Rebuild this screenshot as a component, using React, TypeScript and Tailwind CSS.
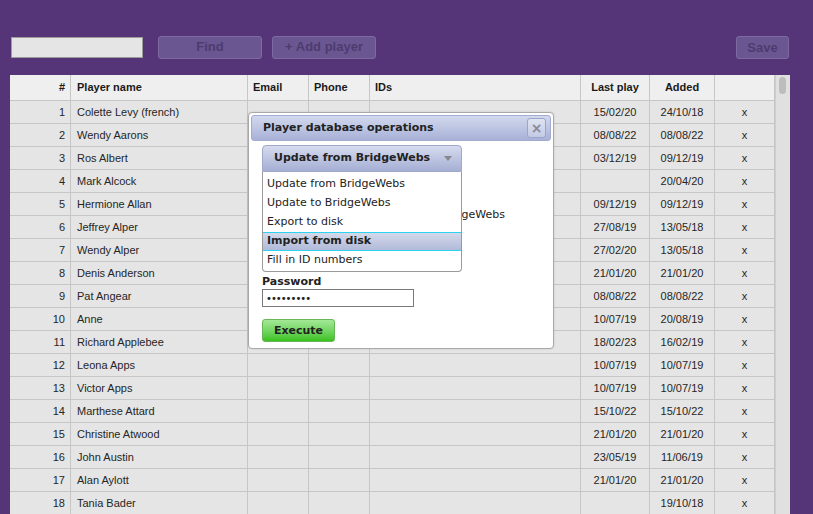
import React from 'react';

type Player = { id: number; name: string; lastPlay: string; added: string };

const PLAYERS: Player[] = [
  { id: 1, name: 'Colette Levy (french)', lastPlay: '15/02/20', added: '24/10/18' },
  { id: 2, name: 'Wendy Aarons', lastPlay: '08/08/22', added: '08/08/22' },
  { id: 3, name: 'Ros Albert', lastPlay: '03/12/19', added: '09/12/19' },
  { id: 4, name: 'Mark Alcock', lastPlay: '', added: '20/04/20' },
  { id: 5, name: 'Hermione Allan', lastPlay: '09/12/19', added: '09/12/19' },
  { id: 6, name: 'Jeffrey Alper', lastPlay: '27/08/19', added: '13/05/18' },
  { id: 7, name: 'Wendy Alper', lastPlay: '27/02/20', added: '13/05/18' },
  { id: 8, name: 'Denis Anderson', lastPlay: '21/01/20', added: '21/01/20' },
  { id: 9, name: 'Pat Angear', lastPlay: '08/08/22', added: '08/08/22' },
  { id: 10, name: 'Anne', lastPlay: '10/07/19', added: '20/08/19' },
  { id: 11, name: 'Richard Applebee', lastPlay: '18/02/23', added: '16/02/19' },
  { id: 12, name: 'Leona Apps', lastPlay: '10/07/19', added: '10/07/19' },
  { id: 13, name: 'Victor Apps', lastPlay: '10/07/19', added: '10/07/19' },
  { id: 14, name: 'Marthese Attard', lastPlay: '15/10/22', added: '15/10/22' },
  { id: 15, name: 'Christine Atwood', lastPlay: '21/01/20', added: '21/01/20' },
  { id: 16, name: 'John Austin', lastPlay: '23/05/19', added: '11/06/19' },
  { id: 17, name: 'Alan Aylott', lastPlay: '21/01/20', added: '21/01/20' },
  { id: 18, name: 'Tania Bader', lastPlay: '', added: '19/10/18' },
];

const OPERATIONS = [
  'Update from BridgeWebs',
  'Update to BridgeWebs',
  'Export to disk',
  'Import from disk',
  'Fill in ID numbers',
];

const GRID = 'grid grid-cols-[61px_177px_61px_61px_211px_69px_65px_60px]';
const CELL = 'border-r border-b border-[#c6c6c6] flex items-center';

function TopButton({ label, width }: { label: string; width: string }) {
  return (
    <button
      className={`${width} h-[23px] rounded-[3px] border border-[#7c6aa1] bg-[#6a5791] text-[13px] font-bold text-[#4d3b70]`}
    >
      {label}
    </button>
  );
}

function OperationsDialog() {
  const selected = 'Import from disk';
  return (
    <div className="absolute left-[248px] top-[112px] w-[306px] h-[237px] rounded-[4px] border border-[#a9a9a9] bg-white p-[2px] font-['DejaVu_Sans',sans-serif] text-[11px] text-[#222] shadow-[0_0_2px_rgba(0,0,0,0.15)]">
      {/* Title bar */}
      <div className="flex h-[26px] items-center justify-between rounded-[3px] border border-[#a3acd0] bg-gradient-to-b from-[#d2d8ed] to-[#a8b2d7] pl-[11px] pr-[4px]">
        <span className="pt-[1px] font-bold">Player database operations</span>
        <span className="flex h-[20px] w-[19px] items-center justify-center rounded-[3px] border border-[#9ba5ca] bg-gradient-to-b from-[#dfe3f1] to-[#c3cae4] text-[14px] font-bold leading-none text-[#8a8a9a]">
          ×
        </span>
      </div>

      {/* Body */}
      <div className="relative px-[11px] pt-[4px]">
        <div className="flex h-[27px] w-[200px] items-center justify-between rounded-t-[4px] border border-[#a1a9cb] bg-gradient-to-b from-[#d6dbee] to-[#a5afd4] pl-[11px] pr-[9px]">
          <span className="font-bold">Update from BridgeWebs</span>
          <span className="h-0 w-0 border-x-[4px] border-t-[5px] border-x-transparent border-t-[#888]" />
        </div>

        {/* Description line, mostly hidden by the open list */}
        <p className="mt-[36px] flex w-[243px] justify-end whitespace-nowrap leading-[13px]">
          <span>Upload all local changes to BridgeWebs</span>
        </p>

        {/* Open dropdown list */}
        <div className="absolute left-[11px] top-[31px] w-[200px] rounded-b-[4px] border border-t-0 border-[#9a9a9a] bg-white pb-[1px] pt-[3px]">
          {OPERATIONS.map((op) =>
            op === selected ? (
              <div
                key={op}
                className="flex h-[19px] items-center border-y border-[#2bd3f0] bg-gradient-to-b from-[#d4d9ea] to-[#b1bad8] pl-[4px] font-bold"
              >
                {op}
              </div>
            ) : (
              <div key={op} className="flex h-[19px] items-center pl-[4px]">
                {op}
              </div>
            )
          )}
        </div>

        <div className="mt-[54px] font-bold leading-[13px]">Password</div>
        <div className="mt-[1px] flex h-[18px] w-[152px] items-center border border-[#7a7a7a] pl-[3px] text-[10px] tracking-[-1px]">
          •••••••••
        </div>
        <button className="mt-[12px] h-[23px] w-[73px] rounded-[3px] border border-[#67b756] bg-gradient-to-b from-[#a3e996] to-[#38c21a] pt-[1px] font-bold">
          Execute
        </button>
      </div>
    </div>
  );
}

export default function App() {
  return (
    <div className="relative h-[514px] w-[813px] overflow-hidden bg-[#553577] font-['Liberation_Sans',Arial,sans-serif]">
      {/* Toolbar */}
      <div className="flex items-center pl-[11px] pt-[35px]">
        <input
          className="h-[21px] w-[132px] border border-[#9c9c9c] bg-[#e5e5e5]"
          readOnly
        />
        <div className="ml-[15px] flex gap-[10px]">
          <TopButton label="Find" width="w-[104px]" />
          <TopButton label="+ Add player" width="w-[104px]" />
        </div>
        <div className="ml-auto mr-[24px]">
          <TopButton label="Save" width="w-[53px]" />
        </div>
      </div>

      {/* Table */}
      <div className="ml-[10px] mt-[16px] flex h-[440px] w-[780px]">
        <div className="w-[765px] overflow-hidden bg-[#e5e5e5] text-[11px] leading-[13px] text-[#262626]">
          <div className={`${GRID} h-[26px] bg-[#efefef] font-bold text-[#1a1a1a]`}>
            <div className={`${CELL} justify-end pr-[5px]`}>#</div>
            <div className={`${CELL} pl-[6px]`}>Player name</div>
            <div className={`${CELL} pl-[5px]`}>Email</div>
            <div className={`${CELL} pl-[5px]`}>Phone</div>
            <div className={`${CELL} pl-[5px]`}>IDs</div>
            <div className={`${CELL} justify-center`}>Last play</div>
            <div className={`${CELL} justify-center`}>Added</div>
            <div className={CELL} />
          </div>
          {PLAYERS.map((p) => (
            <div key={p.id} className={`${GRID} h-[23px]`}>
              <div className={`${CELL} justify-end pr-[5px]`}>{p.id}</div>
              <div className={`${CELL} pl-[6px]`}>{p.name}</div>
              <div className={CELL} />
              <div className={CELL} />
              <div className={CELL} />
              <div className={`${CELL} justify-center`}>{p.lastPlay}</div>
              <div className={`${CELL} justify-center`}>{p.added}</div>
              <div className={`${CELL} justify-center`}>x</div>
            </div>
          ))}
        </div>
        {/* Scrollbar */}
        <div className="w-[15px] border-l border-[#cdcdcd] bg-[#e0e0e0] pl-[3px] pt-[2px]">
          <div className="h-[17px] w-[7px] rounded-full bg-[#bdbdbd]" />
        </div>
      </div>

      <OperationsDialog />
    </div>
  );
}
